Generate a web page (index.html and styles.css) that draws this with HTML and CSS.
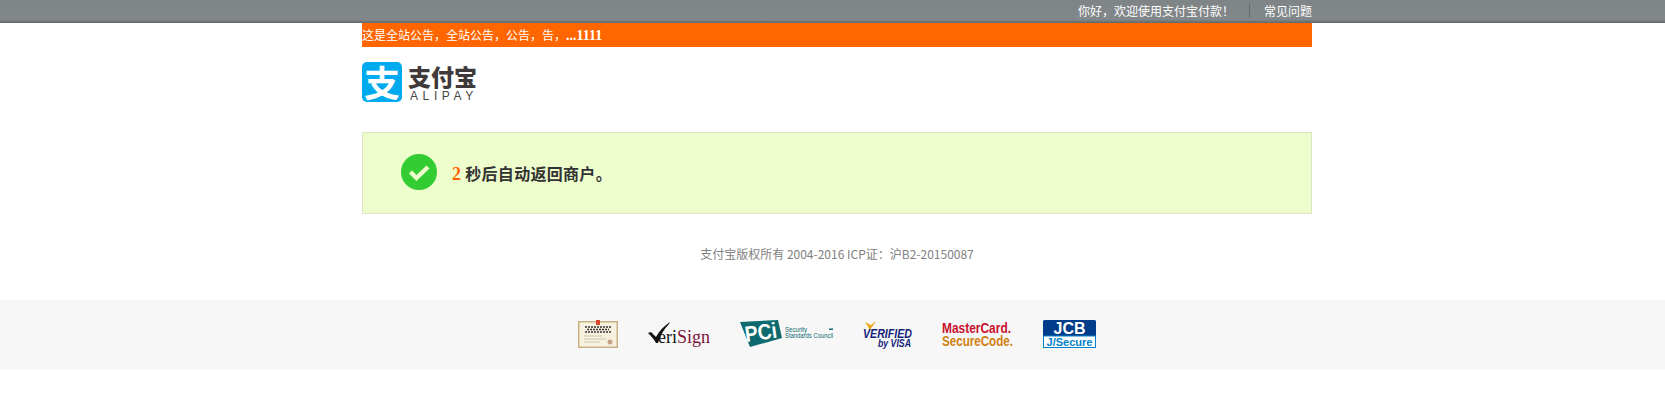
FILE: index.html
```html
<!DOCTYPE html>
<html lang="zh-CN">
<head>
  <meta charset="UTF-8" />
  <title>支付宝</title>
  <link rel="stylesheet" href="styles.css">
</head>
<body>
  <div class="topbar">
    <div class="wrap topbar-inner">
      <span>你好，欢迎使用支付宝付款！</span>
      <i class="sep"></i>
      <a href="#">常见问题</a>
    </div>
  </div>

  <div class="wrap">
    <div class="notice">这是全站公告，全站公告，公告，告，<b>...1111</b></div>

    <div class="logo">
      <div class="logo-mark">支</div>
      <div class="logo-text">
        <div class="logo-cn">支付宝</div>
        <div class="logo-en">ALIPAY</div>
      </div>
    </div>

    <div class="alert">
      <svg class="alert-icon" width="36" height="36" viewBox="0 0 36 36">
        <circle cx="18" cy="18" r="18" fill="#33cc33"/>
        <path d="M9.5 18l6 6L27 13" fill="none" stroke="#edfdcc" stroke-width="4.4"/>
      </svg>
      <div class="alert-text"><em>2</em> 秒后自动返回商户。</div>
    </div>

    <div class="copy">支付宝版权所有 2004-2016 ICP证：沪B2-20150087</div>
  </div>

  <div class="badges">
    <div class="badge-row">
      <svg width="40" height="28" viewBox="0 0 40 28">
        <rect x=".75" y="1.75" width="38.5" height="25.5" fill="#f7f2e0" stroke="#c9b184" stroke-width="1.5"/>
        <rect x="18" y="0" width="4" height="5" fill="#d9482e"/>
        <path d="M7 7h26M9 9.500h22M7 12h26" stroke="#333" stroke-width="1.300" stroke-dasharray="2 1"/>
        <path d="M6 16h18M6 19h22M6 22h16" stroke="#cfc6aa"/>
        <circle cx="32" cy="22" r="2.500" fill="#c9a28a"/>
      </svg>

      <svg width="62" height="28" viewBox="0 0 62 28">
        <path d="M0 13l3-1 5 5C11 11 16 6 22 2l-1 2C16 9 12 16 10 23H8C6 19 3 16 0 13z" fill="#111"/>
        <text x="10" y="23" class="vs"><tspan fill="#111">eri</tspan><tspan fill="#7d1338">Sign</tspan></text>
      </svg>

      <svg width="93" height="28" viewBox="0 0 93 28">
        <path d="M0 2L38 0l4 18-32 9z" fill="#0d6b70"/>
        <text x="6" y="22" class="pci-mark" transform="rotate(-8 6 22)" textLength="32" lengthAdjust="spacingAndGlyphs">PCi</text>
        <text x="45" y="12" class="pci-small" textLength="22" lengthAdjust="spacingAndGlyphs">Security</text>
        <text x="45" y="18" class="pci-small" textLength="48" lengthAdjust="spacingAndGlyphs">Standards Council</text>
        <rect x="89" y="8.500" width="4" height="1.500" fill="#0d6b70"/>
      </svg>

      <svg width="49" height="27" viewBox="0 0 49 27">
        <path d="M2 2l5 8 6-9-5 4z" fill="#f0a81c"/>
        <text x="0" y="18" class="visa-a" textLength="49" lengthAdjust="spacingAndGlyphs">VERIFIED</text>
        <text x="15" y="26.500" class="visa-b" textLength="33" lengthAdjust="spacingAndGlyphs">by VISA</text>
      </svg>

      <svg width="71" height="27" viewBox="0 0 71 27">
        <text x="0" y="13" class="mc mc-a" textLength="69" lengthAdjust="spacingAndGlyphs">MasterCard.</text>
        <text x="0" y="26" class="mc mc-b" textLength="71" lengthAdjust="spacingAndGlyphs">SecureCode.</text>
      </svg>

      <svg width="53" height="28" viewBox="0 0 53 28">
        <rect width="53" height="28" rx="1.500" fill="#003c8c"/>
        <rect x=".5" y="16" width="52" height="11.500" fill="#fff" stroke="#0080c8"/>
        <text x="26.500" y="14" class="jcb-a">JCB</text>
        <text x="26.500" y="25.500" class="jcb-b" textLength="46" lengthAdjust="spacingAndGlyphs">J/Secure</text>
      </svg>
    </div>
  </div>
</body>
</html>
```

FILE: styles.css
```css
body {
  margin: 0;
  padding: 0;
  background: #fff;
  font-family: "Noto Sans CJK SC", "Liberation Sans", sans-serif;
  font-size: 12px;
  color: #333;
}

.wrap {
  width: 950px;
  margin-left: 362px;
}

.topbar {
  height: 23px;
  background: linear-gradient(#7f8487, #82878a 85%, #62676a);
  color: #fff;
}

.topbar-inner {
  display: flex;
  justify-content: flex-end;
  align-items: center;
  height: 22px;
  line-height: 22px;
}

.topbar a {
  color: #fff;
  text-decoration: none;
}

.sep {
  width: 1px;
  height: 14px;
  margin: 0 14px 0 15px;
  background: #666b6e;
}

.notice {
  height: 24px;
  line-height: 24px;
  background: #ff6600;
  color: #fff;
  white-space: nowrap;
}

.notice b {
  font-family: "Liberation Serif", serif;
  font-size: 14px;
}

.logo {
  display: flex;
  margin-top: 15px;
  height: 40px;
}

.logo-mark {
  width: 40px;
  height: 40px;
  border-radius: 5px;
  background: #00aaee;
  color: #fff;
  font-size: 36px;
  font-weight: 700;
  line-height: 38px;
  text-align: center;
}

.logo-text {
  margin-left: 6px;
  color: #3f3a39;
}

.logo-cn {
  font-size: 23px;
  font-weight: 900;
  line-height: 24px;
  margin-top: 2px;
}

.logo-en {
  font-family: "Liberation Sans", sans-serif;
  font-size: 12px;
  line-height: 12px;
  letter-spacing: 4.600px;
  margin-left: 2px;
  margin-top: 2px;
  color: #444;
}

.alert {
  display: flex;
  align-items: center;
  box-sizing: border-box;
  height: 82px;
  margin-top: 30px;
  padding: 0 0 2px 38px;
  border: 1px solid #dde5c3;
  background: #edfdcc;
}

.alert-text {
  margin: 2px 0 0 15px;
  font-size: 16px;
  font-weight: 700;
  letter-spacing: .3px;
  color: #333;
}

.alert-text em {
  font-family: "Liberation Serif", serif;
  font-size: 18px;
  font-style: normal;
  color: #ff6600;
}

.copy {
  margin-top: 30px;
  height: 56px;
  line-height: 20px;
  text-align: center;
  color: #808080;
}

.badges {
  height: 70px;
  background: #f7f7f7;
}

.badge-row {
  display: flex;
  justify-content: center;
  gap: 30px;
  width: 950px;
  margin-left: 362px;
  padding-top: 20px;
}

.badge-row svg {
  display: block;
  overflow: visible;
}

.vs {
  font-family: "Liberation Serif", serif;
  font-size: 18px;
}

.pci-mark {
  font-family: "Liberation Sans", sans-serif;
  font-size: 22px;
  font-weight: 700;
  fill: #fff;
}

.pci-small {
  font-family: "Liberation Sans", sans-serif;
  font-size: 6.500px;
  fill: #0d6b70;
}

.visa-a,
.visa-b {
  font-family: "Liberation Sans", sans-serif;
  font-style: italic;
  font-weight: 700;
  fill: #14237d;
}

.visa-a {
  font-size: 13px;
}

.visa-b {
  font-size: 11px;
}

.mc {
  font-family: "Liberation Sans", sans-serif;
  font-weight: 700;
  font-size: 15px;
}

.mc-a {
  fill: #c8102e;
}

.mc-b {
  fill: #d07f10;
}

.jcb-a,
.jcb-b {
  font-family: "Liberation Sans", sans-serif;
  font-weight: 700;
  text-anchor: middle;
}

.jcb-a {
  font-size: 16px;
  fill: #fff;
}

.jcb-b {
  font-size: 11px;
  fill: #0080c8;
}
```
